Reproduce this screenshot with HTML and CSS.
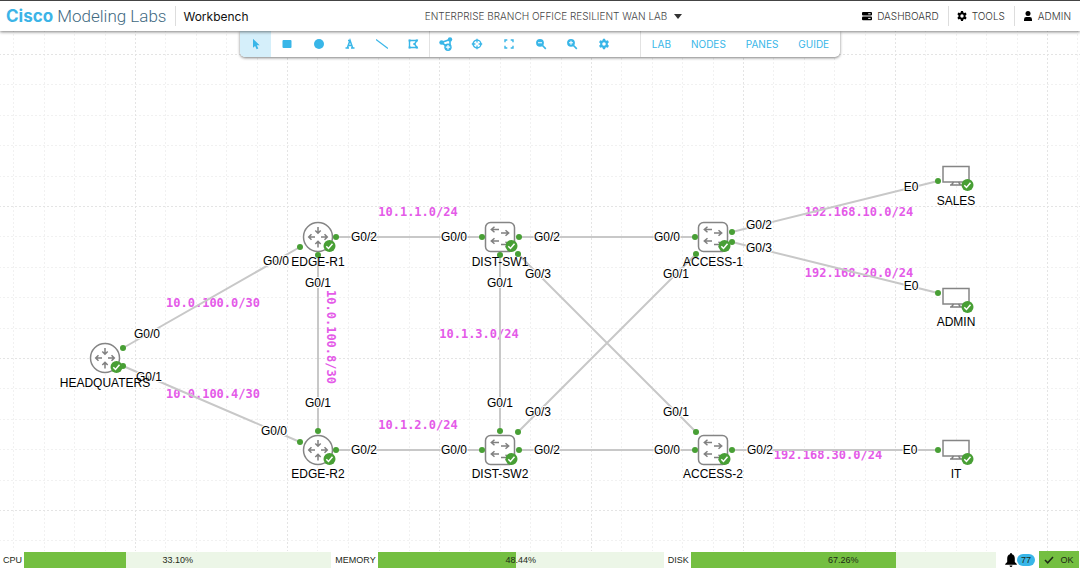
FILE: index.html
```html
<!DOCTYPE html>
<html lang="en">
<head>
<meta charset="utf-8">
<title>Cisco Modeling Labs - Workbench</title>
<link rel="stylesheet" href="styles.css">
</head>
<body>
<header class="header">
  <div class="brand"><span class="logo"><strong>Cisco</strong> Modeling Labs</span><span class="page-name">Workbench</span></div>
  <button class="lab-title" type="button">ENTERPRISE BRANCH OFFICE RESILIENT WAN LAB
    <svg width="8" height="5" viewBox="0 0 8 5"><path d="M0 0h8L4 5z" fill="#333"/></svg>
  </button>
  <nav class="main-nav">
    <a href="#dashboard"><svg width="10" height="10" viewBox="0 0 10 10"><rect y="1" width="10" height="3.6" rx="1"/><rect y="5.6" width="10" height="3.6" rx="1"/><path d="M6.2 2.8h2.4M6.2 7.4h2.4" stroke="#fff"/></svg>DASHBOARD</a>
    <a href="#tools"><svg width="10" height="10" viewBox="0 0 16 16"><use href="#gear"/></svg>TOOLS</a>
    <a href="#admin"><svg width="10" height="10" viewBox="0 0 10 10"><circle cx="5" cy="2.6" r="2.5"/><path d="M1 10V8.4Q1 6 3.2 6h3.6Q9 6 9 8.4V10z"/></svg>ADMIN</a>
  </nav>
</header>

<main class="workspace">
  <div class="toolbar" role="toolbar" aria-label="Canvas tools">
    <div class="tools">
      <button class="tool active" type="button" aria-label="Select"><svg viewBox="0 0 12 12"><path d="M3 .8v9l2.1-1.9 1.5 3.4 1.7-.8-1.5-3.2h2.9z"/></svg></button>
      <button class="tool" type="button" aria-label="Rectangle"><svg viewBox="0 0 12 12"><rect x="1.5" y="2" width="9" height="8" rx="1"/></svg></button>
      <button class="tool" type="button" aria-label="Ellipse"><svg viewBox="0 0 12 12"><circle cx="6" cy="6" r="5"/></svg></button>
      <button class="tool" type="button" aria-label="Text"><svg viewBox="0 0 12 12"><path d="M1.500 10h3.500M7 10h3.500M3.300 10L6 2.300 8.700 10M4.300 7.400h3.400M4 2.400H6" fill="none" stroke="currentColor" stroke-width="1.500"/></svg></button>
      <button class="tool" type="button" aria-label="Line"><svg viewBox="0 0 12 12"><path d="M0 1.5l12 9" fill="none" stroke="currentColor" stroke-width="1.200"/></svg></button>
      <button class="tool" type="button" aria-label="Polygon"><svg viewBox="0 0 12 12"><path d="M2.500 2.500h7.500L7.500 6 10 9.500H2.500z" fill="none" stroke="currentColor" stroke-width="1.400"/><path d="M1.600 1.600h2v2h-2zM1.600 8.400h2v2h-2zM8.800 1.600h2v2h-2zM8.800 8.400h2v2h-2zM6.400 5h2v2h-2z"/></svg></button>
    </div>
    <div class="tools view-tools">
      <button class="tool" type="button" aria-label="Add nodes"><svg class="large" viewBox="0 0 14 14"><path d="M2.500 5.500l8.500-3v7M3 6l6 4" fill="none" stroke="currentColor" stroke-width="1.600"/><circle cx="2.600" cy="5.500" r="2.300"/><circle cx="11" cy="2.400" r="2.200"/><circle cx="9" cy="10.200" r="3.700"/><path d="M9 8v4.400M6.800 10.200h4.400" stroke="#fff" stroke-width="1.200"/></svg></button>
      <button class="tool" type="button" aria-label="Center"><svg viewBox="0 0 12 12"><circle cx="6" cy="6" r="3.900" fill="none" stroke="currentColor" stroke-width="1.400"/><path d="M6 .8v3.600M6 7.600v3.600M.8 6h3.600M7.600 6h3.600" stroke="currentColor" stroke-width="1.300"/></svg></button>
      <button class="tool" type="button" aria-label="Fit to screen"><svg viewBox="0 0 12 12"><path d="M2 4.300V2h2.300M7.700 2H10v2.300M10 7.700V10H7.700M4.300 10H2V7.700" fill="none" stroke="currentColor" stroke-width="1.400"/></svg></button>
      <button class="tool" type="button" aria-label="Zoom out"><svg viewBox="0 0 12 12"><circle cx="5" cy="4.800" r="3.900"/><path d="M7.500 7.500l3.300 3.300" stroke="currentColor" stroke-width="1.700"/><path d="M3 4.800h4" stroke="#fff" stroke-width="1.100"/></svg></button>
      <button class="tool" type="button" aria-label="Zoom in"><svg viewBox="0 0 12 12"><circle cx="5" cy="4.800" r="3.900"/><path d="M7.500 7.500l3.300 3.300" stroke="currentColor" stroke-width="1.700"/><path d="M3 4.800h4M5 2.800v4" stroke="#fff" stroke-width="1.100"/></svg></button>
      <button class="tool" type="button" aria-label="Settings"><svg viewBox="-1 -1 18 18"><use href="#gear"/></svg></button>
    </div>
    <div class="menus">
      <button type="button">LAB</button><button type="button">NODES</button><button type="button">PANES</button><button type="button">GUIDE</button>
    </div>
  </div>

  <svg class="canvas" role="img" aria-label="Network topology">
    <defs>
      <path id="gear" fill-rule="evenodd" d="M6.4 0h3.2l.5 2.3 1.4.8 2.3-.7 1.6 2.8-1.7 1.6v2.4l1.7 1.6-1.6 2.8-2.3-.7-1.4.8-.5 2.3H6.4l-.5-2.3-1.4-.8-2.3.7L.6 10.800l1.700-1.600V6.800L.6 5.200l1.600-2.800 2.300.7 1.400-.8zM8 5.300a2.700 2.700 0 1 0 0 5.400a2.700 2.700 0 1 0 0-5.400z"/>
      <pattern id="grid" x="135" y="23" width="152" height="152" patternUnits="userSpaceOnUse">
        <path class="grid-line" d="M30.500 0v152M61.500 0v152M91.500 0v152M122.500 0v152M0 30.500h152M0 61.500h152M0 91.500h152M0 122.500h152"/>
        <path class="grid-line major" d="M.5 0v152M0 .5h152"/>
      </pattern>
      <g id="badge"><circle r="6" fill="#489f35"/><path d="M-3.200 .2l2.200 2.300L3 -2.200" fill="none" stroke="#fff" stroke-width="1.500"/></g>
      <g id="router">
        <circle class="shape" r="14.500"/>
        <path class="arrows" d="M0 -10v6M-2.700 -6.500L0 -3.800 2.700 -6.500M0 10.500v-6M-2.700 7L0 4.300 2.700 7M-3 0h-6.500M-6.500 -2.700L-9.300 0l2.800 2.700M3 0h6.500M6.500 -2.700L9.300 0 6.500 2.700"/>
        <use href="#badge" x="11.500" y="9"/>
      </g>
      <g id="switch">
        <rect class="shape" x="-14.500" y="-14.500" width="29" height="29" rx="5"/>
        <path class="arrows" d="M-1 -7.500h-7.500M-5.500 -10.300L-8.700 -7.500l3.200 2.800M1 -4h7.500M5.500 -6.800L8.700 -4 5.500 -1.200M-1 4h-7.500M-5.500 1.200L-8.700 4l3.200 2.800M1 7.500h7.500M5.500 4.700l3.200 2.800-3.200 2.800"/>
        <use href="#badge" x="11.500" y="9"/>
      </g>
      <g id="desktop">
        <rect class="shape" x="-13" y="-10.500" width="26" height="15.500"/>
        <path class="arrows" d="M-6 8H6M-2.500 5L-4.500 8M2.500 5L4.500 8"/>
        <use href="#badge" x="11.500" y="8"/>
      </g>
    </defs>
    <rect width="100%" height="100%" fill="url(#grid)"/>

    <!-- Coordinates are window coordinates; the canvas starts below the header. -->
    <g transform="translate(0 -31)">
      <g class="subnet">
        <text x="418" y="216">10.1.1.0/24</text>
        <text x="213" y="307">10.0.100.0/30</text>
        <text x="213" y="398">10.0.100.4/30</text>
        <text x="479" y="338">10.1.3.0/24</text>
        <text x="418" y="429">10.1.2.0/24</text>
        <text x="859" y="216">192.168.10.0/24</text>
        <text x="859" y="277">192.168.20.0/24</text>
        <text x="828" y="459">192.168.30.0/24</text>
        <text transform="translate(327 337) rotate(90)">10.0.100.8/30</text>
      </g>
      <path class="link" d="M123 348L300 247M123 366L300 442M336 237H482M318 255V431M336 450H482M519 237H695M500 255V431M518 254L696 432M518 432L696 254M519 450H695M732 232L938 181M732 242L938 293M732 450H938"/>
      <g class="nodes">
        <use href="#router" x="105" y="358"/>
        <use href="#router" x="318" y="237"/>
        <use href="#router" x="318" y="450"/>
        <use href="#switch" x="500" y="237"/>
        <use href="#switch" x="500" y="450"/>
        <use href="#switch" x="713" y="237"/>
        <use href="#switch" x="713" y="450"/>
        <use href="#desktop" x="956" y="177"/>
        <use href="#desktop" x="956" y="299"/>
        <use href="#desktop" x="956" y="451"/>
      </g>
      <g class="ports">
        <circle cx="123" cy="348" r="3"/><circle cx="123" cy="366" r="3"/>
        <circle cx="300" cy="247" r="3"/><circle cx="336" cy="237" r="3"/><circle cx="318" cy="255" r="3"/>
        <circle cx="300" cy="442" r="3"/><circle cx="336" cy="450" r="3"/><circle cx="318" cy="431" r="3"/>
        <circle cx="482" cy="237" r="3"/><circle cx="519" cy="237" r="3"/><circle cx="500" cy="255" r="3"/><circle cx="518" cy="254" r="3"/>
        <circle cx="482" cy="450" r="3"/><circle cx="519" cy="450" r="3"/><circle cx="500" cy="431" r="3"/><circle cx="518" cy="432" r="3"/>
        <circle cx="695" cy="237" r="3"/><circle cx="696" cy="254" r="3"/><circle cx="732" cy="232" r="3"/><circle cx="732" cy="242" r="3"/>
        <circle cx="695" cy="450" r="3"/><circle cx="696" cy="432" r="3"/><circle cx="732" cy="450" r="3"/>
        <circle cx="938" cy="181" r="3"/><circle cx="938" cy="293" r="3"/><circle cx="938" cy="450" r="3"/>
      </g>
      <g class="port-labels">
        <text x="147" y="338">G0/0</text><text x="149" y="381">G0/1</text>
        <text x="276" y="265">G0/0</text><text x="364" y="241">G0/2</text><text x="318" y="287">G0/1</text>
        <text x="274" y="435">G0/0</text><text x="364" y="454">G0/2</text><text x="318" y="407">G0/1</text>
        <text x="454" y="241">G0/0</text><text x="547" y="241">G0/2</text><text x="500" y="287">G0/1</text><text x="538" y="278">G0/3</text>
        <text x="454" y="454">G0/0</text><text x="547" y="454">G0/2</text><text x="500" y="407">G0/1</text><text x="538" y="416">G0/3</text>
        <text x="667" y="241">G0/0</text><text x="676" y="278">G0/1</text><text x="759" y="229">G0/2</text><text x="759" y="252">G0/3</text>
        <text x="667" y="454">G0/0</text><text x="676" y="416">G0/1</text><text x="760" y="454">G0/2</text>
        <text x="911" y="191">E0</text><text x="911" y="290">E0</text><text x="910" y="454">E0</text>
      </g>
      <g class="node-labels">
        <text x="105" y="387">HEADQUATERS</text>
        <text x="318" y="266">EDGE-R1</text><text x="318" y="478">EDGE-R2</text>
        <text x="500" y="266">DIST-SW1</text><text x="500" y="478">DIST-SW2</text>
        <text x="713" y="266">ACCESS-1</text><text x="713" y="478">ACCESS-2</text>
        <text x="956" y="205">SALES</text><text x="956" y="326">ADMIN</text><text x="956" y="478">IT</text>
      </g>
    </g>
  </svg>
</main>

<footer class="status">
  <div class="meters">
    <div class="meter"><span id="cpu">CPU</span><div class="bar" role="progressbar" aria-labelledby="cpu" aria-valuenow="33.1"><div class="fill" style="width:33.10%"></div><span class="value">33.10%</span></div></div>
    <div class="meter"><span id="memory">MEMORY</span><div class="bar" role="progressbar" aria-labelledby="memory" aria-valuenow="48.44"><div class="fill" style="width:48.44%"></div><span class="value">48.44%</span></div></div>
    <div class="meter"><span id="disk">DISK</span><div class="bar" role="progressbar" aria-labelledby="disk" aria-valuenow="67.26"><div class="fill" style="width:67.26%"></div><span class="value">67.26%</span></div></div>
  </div>
  <button class="notices" type="button" aria-label="77 notifications"><svg width="12" height="14" viewBox="0 0 12 14"><path d="M6 0q1 0 1 1.200Q9.800 2 9.800 5.500V9l2 2v.8H.2V11l2-2V5.500Q2.200 2 5 1.200 5 0 6 0zM4.500 12.400h3Q7.200 14 6 14t-1.500-1.600z"/></svg><span class="count">77</span></button>
  <button class="ok" type="button"><svg width="10" height="8" viewBox="0 0 10 8"><path d="M1 4l2.700 2.800L9 1" fill="none" stroke="#1d2a17" stroke-width="1.500"/></svg>OK</button>
</footer>
</body>
</html>
```
FILE: styles.css
```css
* { box-sizing: border-box; }

body {
  display: flex;
  flex-direction: column;
  min-height: 100vh;
  margin: 0;
  background: #fff;
  color: #111;
  font-family: Inter, "Liberation Sans", sans-serif;
}

button {
  padding: 0;
  border: 0;
  background: none;
  color: inherit;
  font: inherit;
}

svg { flex: none; }

.header {
  position: relative;
  z-index: 2;
  display: grid;
  grid-template-columns: 1fr auto 1fr;
  align-items: center;
  height: 31px;
  padding: 0 9px 0 6px;
  border-top: 1px solid #444;
  background: #fff;
  box-shadow: 0 1px 3px rgba(0, 0, 0, 0.5);
}

.brand {
  display: flex;
  align-items: center;
  white-space: nowrap;
}

.logo {
  padding-right: 9px;
  border-right: 1px solid #ddd;
  color: #3f6a82;
  font-family: Roboto, sans-serif;
  font-size: 17px;
  font-weight: 300;
  line-height: 20px;
}

.logo strong {
  color: #3cb4e7;
  font-family: Inter, sans-serif;
  font-size: 17px;
  font-weight: 700;
}

.page-name {
  padding-left: 7px;
  font-size: 12px;
}

.lab-title {
  display: flex;
  align-items: center;
  gap: 7px;
  padding-left: 30px;
  color: #444;
  font-size: 10px;
  font-weight: 300;
  white-space: nowrap;
}

.main-nav {
  display: flex;
  justify-content: flex-end;
}

.main-nav a {
  display: flex;
  align-items: center;
  gap: 5px;
  padding: 0 9px 0 8px;
  border-left: 1px solid #ddd;
  color: #333;
  font-size: 10px;
  font-weight: 300;
  line-height: 20px;
  text-decoration: none;
}

.main-nav a:first-child { border-left: 0; }
.main-nav a:last-child { padding-right: 0; }

.workspace {
  display: flex;
  position: relative;
  flex: 1;
  justify-content: center;
  align-items: flex-start;
}

.toolbar {
  display: flex;
  z-index: 1;
  height: 26px;
  overflow: hidden;
  border-radius: 0 0 5px 5px;
  background: #fff;
  box-shadow: 0 1px 3px rgba(0, 0, 0, 0.5);
  color: #38b6e8;
}

.tools {
  display: flex;
  width: 190px;
  border-right: 1px solid #e2e2e2;
}

.view-tools {
  width: 211px;
  padding-right: 20px;
}

.tool {
  display: flex;
  flex: 1;
  justify-content: center;
  align-items: center;
}

.tool.active { background: #d5effa; }

.tool svg {
  width: 12px;
  height: 12px;
  fill: currentColor;
}

.tool .large {
  width: 14px;
  height: 14px;
}

.menus {
  display: flex;
  gap: 20px;
  padding: 0 11px;
  font-size: 10px;
}

.canvas {
  position: absolute;
  inset: 0;
  width: 100%;
  height: 100%;
  font: 12px "Liberation Sans", Arial, sans-serif;
  text-anchor: middle;
}

.grid-line {
  stroke: #f1f1f1;
  stroke-dasharray: 2 2;
}

.major { stroke: #e4e4e4; }

.subnet {
  fill: #e45ae8;
  font: bold 12px "DejaVu Sans Mono", monospace;
}

.link {
  fill: none;
  stroke: #c8c8c8;
  stroke-width: 2;
}

.shape {
  fill: #fff;
  stroke: #858585;
  stroke-width: 1.5;
}

.arrows {
  fill: none;
  stroke: #808080;
  stroke-width: 1.5;
}

.ports { fill: #489f35; }

.port-labels {
  stroke: #fff;
  stroke-width: 2;
  paint-order: stroke;
}

.status {
  display: flex;
  z-index: 1;
  align-items: stretch;
  height: 17px;
  padding-right: 1px;
  background: #fff;
  color: #1d2a17;
  font-family: "Liberation Sans", Arial, sans-serif;
  font-size: 9px;
}

.meters {
  display: grid;
  flex: 1;
  grid-template-columns: repeat(3, 1fr);
  padding-top: 1px;
}

.meter {
  display: flex;
  align-items: center;
  gap: 2px;
  padding: 0 1px 0 3px;
}

.bar {
  display: grid;
  flex: 1;
  height: 16px;
  align-items: center;
  background: #ecf6e7;
}

.fill,
.value { grid-area: 1 / 1; }

.fill {
  height: 16px;
  background: #74bf41;
}

.value { text-align: center; }

.notices {
  display: flex;
  align-items: center;
  padding: 0 4px 0 8px;
}

.count {
  padding: 0 4px;
  border-radius: 6px;
  background: #38b6e8;
  line-height: 12px;
}

.ok {
  display: flex;
  justify-content: center;
  align-items: center;
  gap: 6px;
  width: 40px;
  background: #74bf41;
}
```
